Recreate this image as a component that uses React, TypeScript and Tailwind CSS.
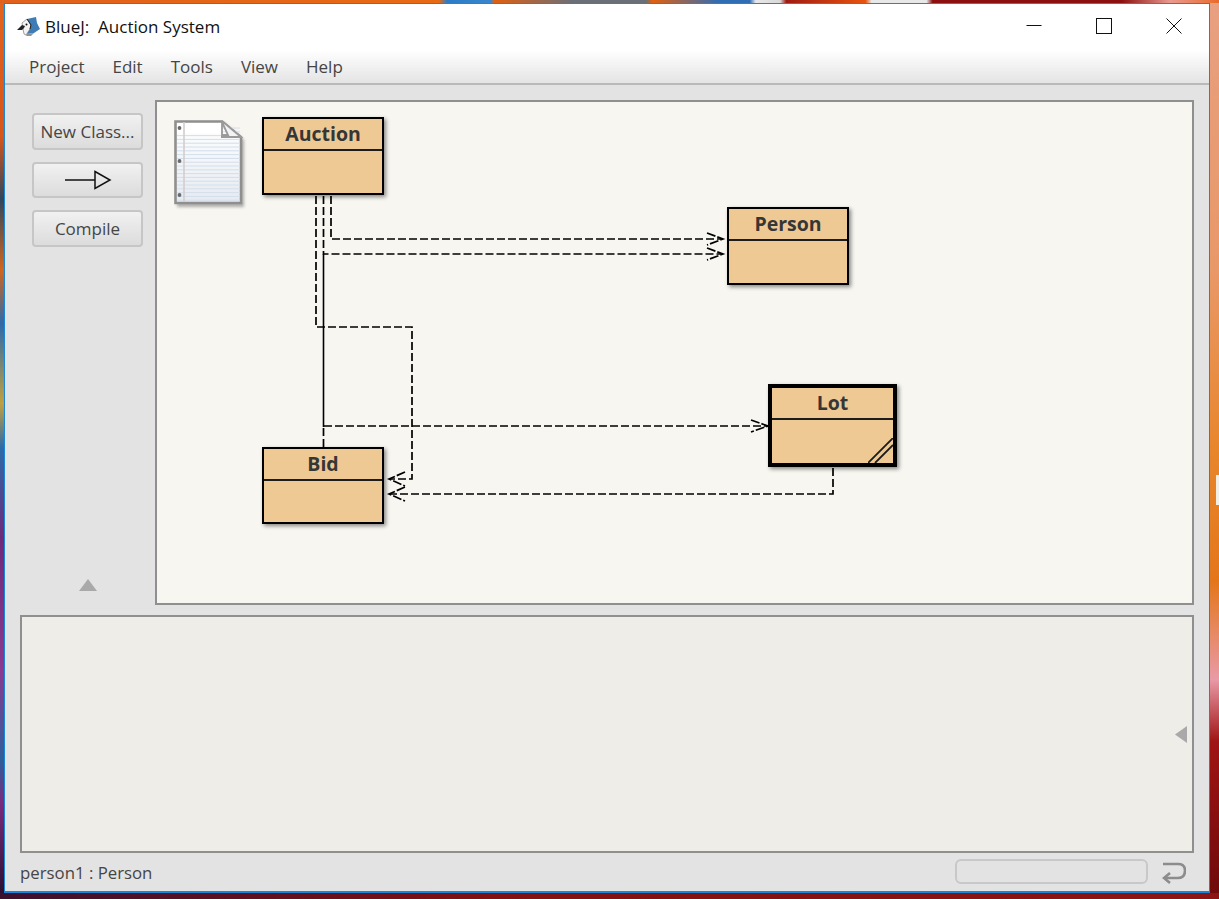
import * as React from 'react';

const UI_FONT = "font-['Open_Sans','Noto_Sans',sans-serif]";

// dashed dependency lines, in page coordinates
const DEPENDENCIES = [
  'M331 196 V239 H722',
  'M323.5 196 V254 H722',
  'M316 196 V327 H412 V479 H390',
  'M324 426 H767',
  'M833 468 V494 H390',
  'M323.5 428 V447',
];

const ARROW_HEADS = [
  'M707 233 L723 239 L707 245',
  'M707 248 L723 254 L707 260',
  'M405 472 L389 479 L405 486',
  'M405 487 L389 494 L405 501',
  'M751 420 L768 426 L751 432',
];

function ToolButton({ children, heightClass }: { children: React.ReactNode; heightClass: string }) {
  return (
    <button className={`flex w-[111px] items-center justify-center rounded-[4px] border-2 border-[#c6c6c6] bg-gradient-to-b from-[#f1f1f1] to-[#dcdcdc] text-[17px] text-[#454545] ${heightClass}`}>
      {children}
    </button>
  );
}

function BirdIcon() {
  return (
    <svg className="h-[21px] w-[24px] shrink-0" viewBox="17 15 24 21">
      <path d="M27 18 L36 16 L37 22 L40 28 L34 32 L27 33 L30 26 Z" fill="#3d7cb4" />
      <path d="M27 33 L34 32 L31 35 L26 35 Z" fill="#8d949b" />
      <path d="M22 22 L27 18 L31 24 L30 28 L26 34 L24 33 L23 28 Z" fill="#f3f3f3" stroke="#666" strokeWidth="0.6" />
      <path d="M17 29 L22 24 L25 25 L24 27 L22 29 Z" fill="#222" />
      <path d="M27 18 L31 24 L30 28" fill="none" stroke="#1d1d1d" strokeWidth="1" />
      <circle cx="26.5" cy="23.5" r="1" fill="#111" />
    </svg>
  );
}

function NoteIcon() {
  const rules = Array.from({ length: 20 }, (_, i) => 128 + i * 3.8);
  return (
    <svg className="absolute left-[13px] top-[14px] h-[94px] w-[78px]" viewBox="170 116 78 94">
      <defs>
        <linearGradient id="sheet" x1="0" y1="0" x2="0" y2="1">
          <stop offset="0" stopColor="#ffffff" />
          <stop offset="1" stopColor="#e6ebf1" />
        </linearGradient>
        <filter id="soft" x="-10%" y="-10%" width="120%" height="120%">
          <feGaussianBlur stdDeviation="1.4" />
        </filter>
        <filter id="slight" x="-5%" y="-5%" width="110%" height="110%">
          <feGaussianBlur stdDeviation="0.35" />
        </filter>
      </defs>
      <path d="M177 123 H224 L244 140 V207 H177 Z" fill="#666" opacity="0.5" filter="url(#soft)" />
      <g filter="url(#slight)">
        <path d="M175.5 121.5 H222 L241 137 V203 H175.5 Z" fill="url(#sheet)" stroke="#8f8f8f" strokeWidth="2.6" />
        {rules.map((y) => (
          <line key={y} x1="177" x2="240" y1={y} y2={y} stroke="#d3deeb" strokeWidth="1" />
        ))}
        <rect x="177" y="123" width="44" height="10" fill="#ffffff" />
        <line x1="184" x2="184" y1="122" y2="202" stroke="#d4cdcd" strokeWidth="1.6" />
        <path d="M222 122 V135 H228 L222 122 M222 121 L241 137 H221" fill="#f2f3f4" stroke="#9a9a9a" strokeWidth="1.8" />
        <circle cx="179.5" cy="128" r="1.9" fill="#6a6a6a" />
        <circle cx="179.5" cy="161" r="1.9" fill="#6a6a6a" />
        <circle cx="179.5" cy="195" r="1.9" fill="#6a6a6a" />
      </g>
    </svg>
  );
}

function ClassBox({ name, className }: { name: string; className: string }) {
  return (
    <div className={`absolute flex flex-col border-2 border-black bg-[#eec994] shadow-[2px_2px_4px_rgba(0,0,0,0.45)] ${className}`}>
      <div className="flex h-[32px] items-center justify-center border-b-2 border-[#1c1c1c] text-[19.5px] font-bold leading-none text-[#363636]">
        {name}
      </div>
    </div>
  );
}

export default function App() {
  return (
    <div className={`flex h-[899px] w-[1219px] flex-col overflow-hidden ${UI_FONT}`}>
      <div className="h-[3px] shrink-0 bg-[linear-gradient(to_right,#e0611c_0,#e86a14_36%,#2a7cc8_36.7%,#3a86cc_40.3%,#e05f10_40.5%,#6a6f78_47%,#6a6f78_53%,#e2600f_53.5%,#2f6db5_59%,#2f6db5_61.5%,#e8e8e8_62%,#d8d8d8_64%,#a01a12_64.5%,#e8540f_71%,#e8e8e8_71.5%,#e8e8e8_76%,#8c1010_76.5%,#8c1010_92%,#ea9a90_96%,#e96a2a_100%)]" />
      <div className="flex min-h-0 flex-1">
        <div className="w-[4px] shrink-0 bg-[linear-gradient(to_bottom,#e2641c_0,#d6561a_15%,#30465c_22%,#d0661e_30%,#2e6aa8_36%,#c0a040_45%,#2c6aa8_50%,#6e2a7a_60%,#8a3a90_75%,#2e5f9a_85%,#7a2a7c_90%,#2c1030_100%)]" />
        <div className="flex w-[1206px] flex-col border border-b-2 border-[#1b85d8] bg-[#e3e3e3]">
          <div className="flex h-[46px] shrink-0 items-center bg-white pl-[12px]">
            <div className="mb-[2px]"><BirdIcon /></div>
            <span className="ml-[4px] whitespace-pre text-[17px] text-[#111]">BlueJ:  Auction System</span>
            <div className="ml-auto flex self-start">
              <div className="flex h-[43px] w-[70px] items-center justify-center">
                <svg className="h-[16px] w-[16px]" viewBox="0 0 16 16"><line x1="0.5" x2="15.5" y1="7.5" y2="7.5" stroke="#111" strokeWidth="1" /></svg>
              </div>
              <div className="flex h-[43px] w-[70px] items-center justify-center">
                <svg className="h-[16px] w-[16px]" viewBox="0 0 16 16"><rect x="0.5" y="0.5" width="15" height="15" fill="none" stroke="#111" strokeWidth="1" /></svg>
              </div>
              <div className="flex h-[43px] w-[70px] items-center justify-center">
                <svg className="h-[16px] w-[16px]" viewBox="0 0 16 16"><path d="M0.5 0.5 L15.5 15.5 M15.5 0.5 L0.5 15.5" fill="none" stroke="#111" strokeWidth="1" /></svg>
              </div>
            </div>
          </div>

          <div className="flex h-[35px] shrink-0 items-center gap-[28px] border-b-2 border-[#b9b9b9] bg-gradient-to-b from-white to-[#e4e4e4] pl-[24px] pt-[1px] text-[17px] text-[#454545]">
            <span>Project</span>
            <span>Edit</span>
            <span>Tools</span>
            <span>View</span>
            <span>Help</span>
          </div>

          <div className="flex flex-1 flex-col pr-[15px] pt-[15px]">
            <div className="flex h-[505px] shrink-0">
              <div className="flex w-[150px] shrink-0 flex-col gap-[12px] pl-[27px] pt-[13px]">
                <ToolButton heightClass="h-[37px]">New Class...</ToolButton>
                <ToolButton heightClass="h-[36px]">
                  <svg className="h-[20px] w-[48px]" viewBox="0 0 48 20">
                    <path d="M1 10 H31" stroke="#111" strokeWidth="1.5" fill="none" />
                    <path d="M31 1.5 L46 10 L31 18.5 Z" fill="none" stroke="#111" strokeWidth="1.5" />
                  </svg>
                </ToolButton>
                <ToolButton heightClass="h-[37px]">Compile</ToolButton>
                <div className="mb-[14px] mt-auto flex w-[111px] justify-center">
                  <svg className="h-[12px] w-[18px]" viewBox="0 0 18 12"><path d="M9 0 L18 12 H0 Z" fill="#a9a9a9" /></svg>
                </div>
              </div>

              <div className="relative flex-1 border-2 border-[#8f8f8f] bg-[#f7f6f1]">
                <NoteIcon />
                <svg className="absolute left-0 top-0 h-[501px] w-[1035px]" viewBox="157 102 1035 501">
                  <path d="M323.5 254 V427" stroke="#000" strokeWidth="1.6" fill="none" />
                  {DEPENDENCIES.map((d) => (
                    <path key={d} d={d} stroke="#000" strokeWidth="1.7" strokeDasharray="8 3" fill="none" />
                  ))}
                  {ARROW_HEADS.map((d) => (
                    <path key={d} d={d} stroke="#000" strokeWidth="1.7" strokeDasharray="9 2" fill="none" />
                  ))}
                </svg>
                <ClassBox name="Auction" className="left-[105px] top-[15px] h-[78px] w-[122px]" />
                <ClassBox name="Person" className="left-[570px] top-[105px] h-[78px] w-[122px]" />
                <ClassBox name="Bid" className="left-[105px] top-[345px] h-[77px] w-[122px]" />
                <div className="absolute left-[611px] top-[282px] flex h-[83px] w-[129px] flex-col border-[4px] border-black bg-[#eec994] shadow-[2px_2px_4px_rgba(0,0,0,0.45)]">
                  <div className="flex h-[32px] items-center justify-center border-b-2 border-[#1c1c1c] text-[19.5px] font-bold leading-none text-[#363636]">
                    Lot
                  </div>
                  <svg className="absolute bottom-0 right-0 h-[25px] w-[25px]" viewBox="0 0 25 25">
                    <path d="M0 25 L25 0 M7 25 L25 7" stroke="#1c1c1c" strokeWidth="1.8" fill="none" />
                  </svg>
                </div>
              </div>
            </div>

            <div className="ml-[15px] mt-[10px] flex h-[238px] shrink-0 items-center justify-end border-2 border-[#8f8f8f] bg-[#eeede8] pr-[5px]">
              <svg className="h-[17px] w-[12px]" viewBox="0 0 12 17"><path d="M0 8.5 L12 0 V17 Z" fill="#a9a9a9" /></svg>
            </div>

            <div className="mr-[-15px] flex h-[39px] shrink-0 items-center pl-[15px] pr-[23px]">
              <span className="text-[16.8px] text-[#454545]">person1 : Person</span>
              <div className="mb-[2px] ml-auto h-[25px] w-[193px] rounded-[6px] border-2 border-[#c8c8c8]" />
              <svg className="ml-[14px] h-[24px] w-[24px]" viewBox="0 0 24 24">
                <path d="M1 3 H16 Q23 3 23 9.5 Q23 17 16 17 H3" fill="none" stroke="#8c8c8c" strokeWidth="2.6" />
                <path d="M8 12 L2 17 L8 22" fill="none" stroke="#8c8c8c" strokeWidth="2.6" />
              </svg>
            </div>
          </div>
        </div>
        <div className="relative w-[9px] shrink-0 bg-[linear-gradient(to_bottom,#e8a080_0,#e99868_30%,#e8862c_50%,#e4761a_65%,#e99aa6_76%,#a01414_83%,#700a0a_100%)]">
          <div className="absolute left-[6px] top-[472px] h-[30px] w-[3px] bg-[#f2efe8]" />
        </div>
      </div>
      <div className="h-[6px] shrink-0 bg-[linear-gradient(to_right,#3c1030_0,#801012_40%,#8c1414_100%)]" />
    </div>
  );
}
